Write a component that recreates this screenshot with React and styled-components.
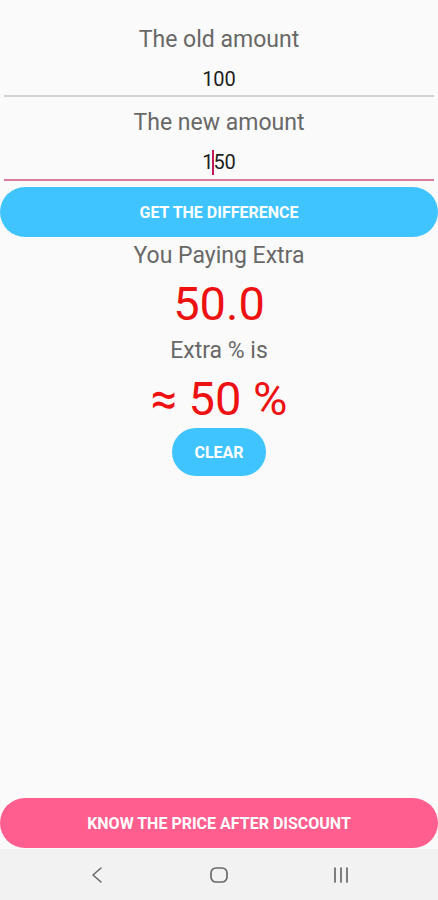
import React from "react";
import styled, { createGlobalStyle } from "styled-components";

const Global = createGlobalStyle`
  html, body { margin: 0; padding: 0; background: #fafafa; }
  body { font-family: Roboto, "Noto Sans", Arial, sans-serif; }
  * { box-sizing: border-box; }
`;

const Screen = styled.div`
  width: 438px;
  height: 900px;
  display: flex;
  flex-direction: column;
  background: #fafafa;
`;

const Content = styled.div`
  flex: 1;
  display: flex;
  flex-direction: column;
  align-items: center;
  padding-top: 26px;
`;

const Form = styled.div`
  align-self: stretch;
  display: flex;
  flex-direction: column;
  gap: 12px;
`;

const Field = styled.div`
  display: flex;
  flex-direction: column;
  align-items: center;
`;

const FieldLabel = styled.div`
  font-size: 23px;
  line-height: 28px;
  color: #686868;
`;

const InputLine = styled.div`
  align-self: stretch;
  margin: 0 4px;
  padding: 13px 0 4px;
  border-bottom: 2px solid ${(p) => (p.$focused ? "#dc7a9a" : "#d2d2d2")};
  display: flex;
  justify-content: center;
  font-size: 20px;
  line-height: 24px;
  color: #1d1d1d;
`;

const Caret = styled.span`
  display: inline-block;
  width: 2px;
  height: 25px;
  margin: 0 -1px;
  background: #c2185b;
`;

const PillButton = styled.button`
  border: none;
  font-family: Roboto, "Noto Sans", Arial, sans-serif;
  font-weight: 700;
  font-size: 16px;
  color: #fff;
  text-transform: uppercase;
  background: ${(p) => p.$color};
  height: ${(p) => p.$height || 50}px;
  border-radius: 25px;
  padding: 0 ${(p) => p.$padX || 0}px;
  margin-top: ${(p) => p.$mt || 0}px;
`;

const WideButton = styled(PillButton)`
  align-self: stretch;
  width: 100%;
`;

const ResultLabel = styled.div`
  font-size: 23px;
  line-height: 28px;
  color: #686868;
  margin-top: ${(p) => p.$mt || 0}px;
`;

const BigValue = styled.div`
  font-size: 47px;
  line-height: 56px;
  color: #ee1111;
  margin-top: ${(p) => p.$mt || 0}px;
`;

const Footer = styled.div`
  display: flex;
  flex-direction: column;
`;

const NavBar = styled.div`
  height: 51px;
  margin-top: 1px;
  background: #f2f2f2;
  display: grid;
  grid-template-columns: repeat(3, 1fr);
  align-items: center;
  justify-items: center;
  padding: 0 36px;
`;

const NavIcon = styled.svg`
  display: block;
`;

export default function App() {
  return (
    <Screen>
      <Global />
      <Content>
        <Form>
          <Field>
            <FieldLabel>The old amount</FieldLabel>
            <InputLine>100</InputLine>
          </Field>
          <Field>
            <FieldLabel>The new amount</FieldLabel>
            <InputLine $focused>
              <span>1</span>
              <Caret />
              <span>50</span>
            </InputLine>
          </Field>
        </Form>
        <WideButton $color="#40c4ff" $mt={6}>
          Get the difference
        </WideButton>
        <ResultLabel $mt={5}>You Paying Extra</ResultLabel>
        <BigValue $mt={6}>50.0</BigValue>
        <ResultLabel $mt={5}>Extra % is</ResultLabel>
        <BigValue $mt={6}>≈ 50 %</BigValue>
        <PillButton $color="#40c4ff" $height={48} $padX={22} $mt={1}>
          Clear
        </PillButton>
      </Content>
      <Footer>
        <WideButton $color="#ff5e8e">Know the price after discount</WideButton>
        <NavBar>
          <NavIcon width="18" height="20" viewBox="0 0 18 20">
            <path d="M13 3 L5 10 L13 17" fill="none" stroke="#6a6a6a" strokeWidth="1.6" strokeLinecap="round" strokeLinejoin="round" />
          </NavIcon>
          <NavIcon width="20" height="20" viewBox="0 0 20 20">
            <rect x="2" y="3" width="16" height="14" rx="5" fill="none" stroke="#6a6a6a" strokeWidth="1.7" />
          </NavIcon>
          <NavIcon width="20" height="20" viewBox="0 0 20 20">
            <path d="M4 3 V17 M10 3 V17 M16 3 V17" fill="none" stroke="#6a6a6a" strokeWidth="1.7" strokeLinecap="round" />
          </NavIcon>
        </NavBar>
      </Footer>
    </Screen>
  );
}
